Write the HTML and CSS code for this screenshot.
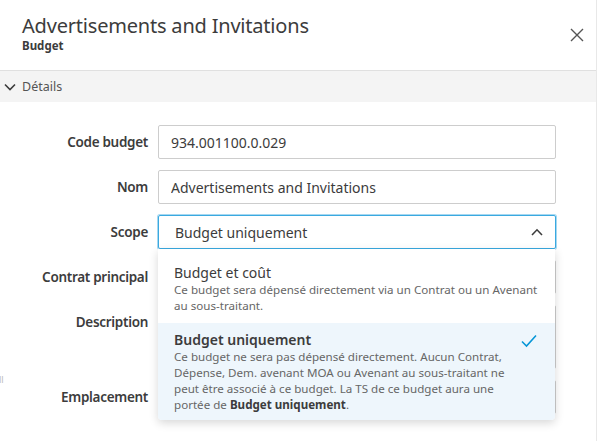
FILE: index.html
```html
<!DOCTYPE html>
<html lang="fr">
<head>
    <meta charset="UTF-8">
    <meta name="viewport" content="width=device-width, initial-scale=1.0">
    <title>Budget</title>
    <link rel="stylesheet" href="styles.css">
</head>
<body>
    <div class="panel">
        <header class="panel-header">
            <div class="titles">
                <h1>Advertisements and Invitations</h1>
                <div class="subtitle">Budget</div>
            </div>
            <button class="close-btn" type="button" aria-label="Fermer">
                <svg width="14" height="14" viewBox="0 0 14 14"><path d="M1 1 L13 13 M13 1 L1 13" stroke="#555" stroke-width="1.4" fill="none"/></svg>
            </button>
        </header>

        <div class="section-bar">
            <svg class="chev-down" width="12" height="8" viewBox="0 0 12 8"><path d="M1 1.5 L6 6.5 L11 1.5" stroke="#3c3c3c" stroke-width="1.6" fill="none"/></svg>
            <span>Détails</span>
        </div>

        <form class="details">
            <div class="form-row">
                <label>Code budget</label>
                <div class="field"><input type="text" value="934.001100.0.029"></div>
            </div>
            <div class="form-row">
                <label>Nom</label>
                <div class="field"><input type="text" value="Advertisements and Invitations"></div>
            </div>
            <div class="form-row">
                <label>Scope</label>
                <div class="field select-wrap">
                    <div class="select open">
                        <span>Budget uniquement</span>
                        <svg width="12" height="8" viewBox="0 0 12 8"><path d="M1 7 L6 1.8 L11 7" stroke="#3c3c3c" stroke-width="1.6" fill="none"/></svg>
                    </div>
                    <ul class="menu">
                        <li class="option">
                            <div class="opt-title">Budget et coût</div>
                            <div class="opt-desc">Ce budget sera dépensé directement via un Contrat ou un Avenant<br>au sous-traitant.</div>
                        </li>
                        <li class="option selected">
                            <div class="opt-title">Budget uniquement</div>
                            <div class="opt-desc">Ce budget ne sera pas dépensé directement. Aucun Contrat,<br>Dépense, Dem. avenant MOA ou Avenant au sous-traitant ne<br>peut être associé à ce budget. La TS de ce budget aura une<br>portée de <b>Budget uniquement</b>.</div>
                            <svg class="check" width="16" height="14" viewBox="0 0 16 14"><path d="M1 7.5 L5.5 12 L15 1.5" stroke="#0696d7" stroke-width="1.6" fill="none"/></svg>
                        </li>
                    </ul>
                </div>
            </div>
            <div class="form-row">
                <label>Contrat principal</label>
                <div class="field"><input type="text" value=""></div>
            </div>
            <div class="form-row">
                <label>Description</label>
                <div class="field"><textarea></textarea></div>
            </div>
            <div class="form-row">
                <label><span class="stray">ll</span>Emplacement</label>
                <div class="field"><input type="text" value=""></div>
            </div>
        </form>
    </div>
</body>
</html>
```

FILE: styles.css
```css
body {
    margin: 0;
    padding: 0;
    background-color: #fff;
    font-family: "Noto Sans", "Open Sans", sans-serif;
    color: #3c3c3c;
    overflow: hidden;
}
.panel {
    width: 596px;
    height: 441px;
    border-right: 1px solid #e8e8e8;
    overflow: hidden;
}
.panel-header {
    height: 71px;
    box-sizing: border-box;
    padding: 13px 12px 0 22px;
    display: flex;
    justify-content: space-between;
    border-bottom: 1px solid #e0e0e0;
}
.panel-header h1 {
    margin: 0;
    font-size: 20px;
    font-weight: 400;
    line-height: 26px;
    color: #3c3c3c;
    letter-spacing: -0.2px;
}
.subtitle {
    font-size: 11.5px;
    font-weight: 700;
    line-height: 14px;
}
.close-btn {
    background: none;
    border: none;
    padding: 0;
    margin-top: 15px;
    width: 14px;
    height: 14px;
    cursor: pointer;
}
.close-btn svg {
    display: block;
}
.section-bar {
    height: 31px;
    background-color: #f4f4f4;
    display: flex;
    align-items: center;
    padding-left: 4px;
    font-size: 12.5px;
    color: #555;
}
.chev-down {
    margin-right: 6px;
}
.details {
    padding-top: 23px;
}
.form-row {
    display: flex;
    align-items: flex-start;
    margin-bottom: 11px;
}
.form-row label {
    width: 158px;
    flex-shrink: 0;
    text-align: right;
    line-height: 34px;
    font-size: 13.5px;
    font-weight: 600;
    letter-spacing: -0.3px;
    color: #3c3c3c;
    padding-right: 10px;
    box-sizing: border-box;
    display: flex;
    justify-content: space-between;
}
.form-row label .stray {
    font-size: 9px;
    font-weight: 400;
    color: #bbb;
    letter-spacing: 0;
    margin-left: -1px;
    margin-top: -17px;
}
.form-row label:not(:has(.stray)) {
    justify-content: flex-end;
}
.field {
    width: 398px;
}
.field input, .field textarea {
    width: 100%;
    height: 34px;
    box-sizing: border-box;
    border: 1px solid #cdcdcd;
    border-radius: 2px;
    padding: 0 12px;
    font-family: inherit;
    font-size: 14px;
    color: #3c3c3c;
    outline: none;
}
.field textarea {
    height: 64px;
    resize: none;
    display: block;
}
.select-wrap {
    position: relative;
}
.select {
    height: 34px;
    box-sizing: border-box;
    border: 1px solid #3aa9e0;
    box-shadow: 0 0 0 1px rgba(58, 169, 224, 0.45);
    border-radius: 2px;
    padding: 0 12px 0 16px;
    display: flex;
    align-items: center;
    justify-content: space-between;
    font-size: 14px;
}
.menu {
    position: absolute;
    top: 34px;
    left: 0;
    width: 397px;
    margin: 0;
    padding: 0;
    list-style: none;
    background: #fff;
    border-radius: 0 0 4px 4px;
    box-shadow: 0 3px 10px rgba(0, 0, 0, 0.16);
    z-index: 5;
    overflow: hidden;
}
.option {
    position: relative;
    padding: 15px 16px 9px;
}
.option.selected {
    background-color: #eef6fc;
    padding: 8px 16px 7px;
}
.opt-title {
    font-size: 14px;
    line-height: 18px;
}
.selected .opt-title {
    font-weight: 600;
}
.opt-desc {
    font-size: 11.6px;
    line-height: 16px;
    color: #666;
    white-space: nowrap;
}
.opt-desc b {
    color: #3c3c3c;
}
.check {
    position: absolute;
    top: 11px;
    right: 18px;
}
```
